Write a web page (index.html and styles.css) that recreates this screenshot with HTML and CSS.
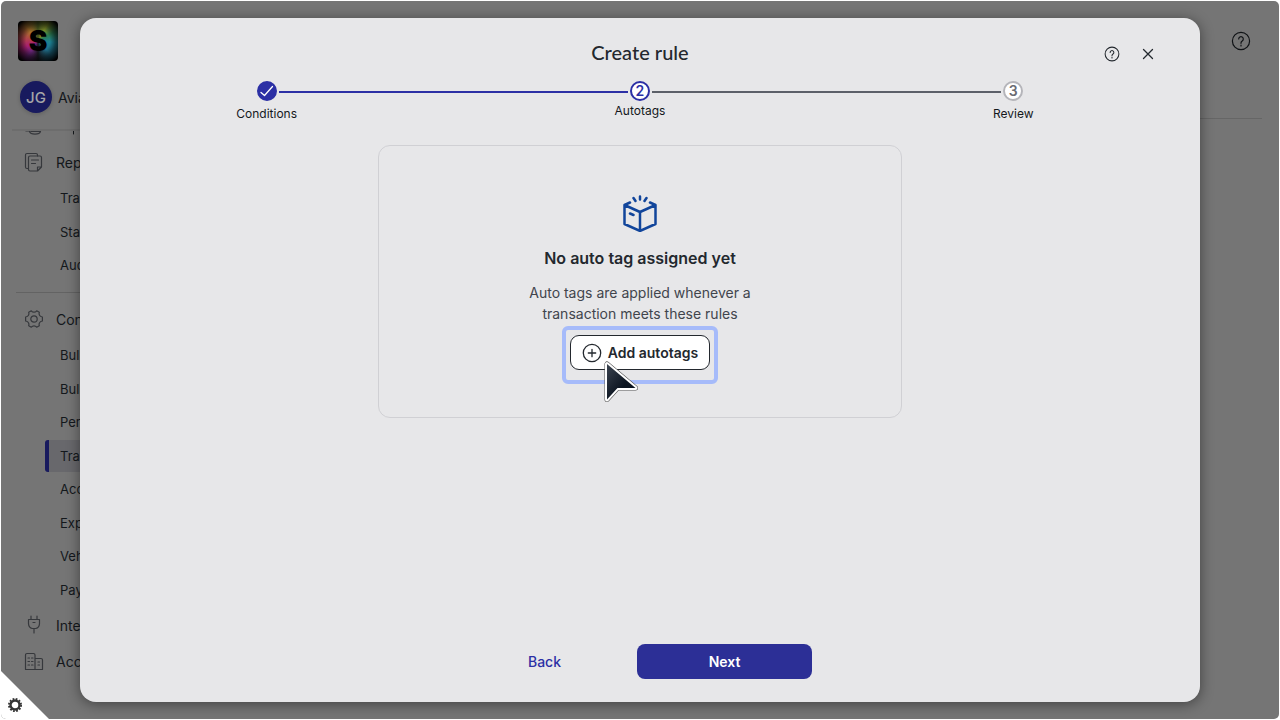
FILE: index.html
```
<!DOCTYPE html>
<html lang="en">
<head>
<meta charset="utf-8">
<meta name="viewport" content="width=device-width, initial-scale=1">
<title>Create rule</title>
<link rel="stylesheet" href="styles.css">
</head>
<body>
<div class="app">
  <aside class="sidebar">
    <div class="logo"><span class="logo-letter">S</span></div>
    <div class="account"><span class="avatar">JG</span><span>Avia</span></div>
    <nav class="nav">
      <div class="cut-row">
        <svg class="nav-icon" viewBox="0 0 20 20"><path d="M2 15h4M5.500 15.500c1 3.500 10 3.500 11 0"/><path d="M7 15.500h9"/></svg>
        <svg class="nav-tail" viewBox="0 0 24 4"><path d="M18.500 0v3"/></svg>
      </div>
      <a class="nav-main" href="#">
        <svg class="nav-icon" viewBox="0 0 20 20"><path d="M4 16.500H3A1.500 1.500 0 0 1 1.500 15V3A1.500 1.500 0 0 1 3 1.500h9A1.500 1.500 0 0 1 13.500 3v1"/><path d="M13.500 19H6a1.500 1.500 0 0 1-1.500-1.500v-12A1.500 1.500 0 0 1 6 4h10a1.500 1.500 0 0 1 1.500 1.500V15zM13.500 19v-4h4M7.500 8h7M7.500 11.500h4"/></svg>
        <span>Rep</span>
      </a>
      <ul class="sub sub-short">
        <li><a href="#">Tra</a></li>
        <li><a href="#">Stat</a></li>
        <li><a href="#">Aud</a></li>
      </ul>
      <hr class="divider">
      <a class="nav-main" href="#">
        <svg class="nav-icon" viewBox="0 0 20 20"><circle cx="10" cy="10" r="3.200"/><path d="M7.300 1.800C8.300 3 9 3.200 10 3.200s1.700-.2 2.700-1.400l2.600 1.500c-.5 1.500-.3 2.200.2 3 .5.900 1.100 1.400 2.900 1.700v4c-1.800.300-2.400.8-2.900 1.700-.5.800-.7 1.500-.2 3l-2.600 1.500c-1-1.200-1.700-1.400-2.700-1.400s-1.700.2-2.700 1.400l-2.600-1.500c.5-1.500.3-2.200-.2-3-.5-.9-1.100-1.400-2.900-1.700V8c1.800-.3 2.400-.8 2.900-1.700.5-.8.700-1.500.2-3z"/></svg>
        <span>Con</span>
      </a>
      <ul class="sub sub-long">
        <li><a href="#">Bulk</a></li>
        <li><a href="#">Bulk</a></li>
        <li><a href="#">Per</a></li>
        <li><a class="current" href="#" aria-current="page">Tra</a></li>
        <li><a href="#">Acc</a></li>
        <li><a href="#">Exp</a></li>
        <li><a href="#">Veh</a></li>
        <li><a href="#">Pay</a></li>
      </ul>
      <a class="nav-main" href="#">
        <svg class="nav-icon" viewBox="0 0 20 20"><path d="M7 1v3.500M13 1v3.500M4.500 4.500h11v4c0 3-2 5-4 5h-3c-2 0-4-2-4-5zM10 13.500V18M9 7.500h2"/></svg>
        <span>Inte</span>
      </a>
      <a class="nav-main" href="#">
        <svg class="nav-icon" viewBox="0 0 20 20"><path d="M1.500 18.500V4A1.500 1.500 0 0 1 3 2.500h6.500A1.500 1.500 0 0 1 11 4v14.500zM11 7.500h6A1.500 1.500 0 0 1 18.500 9v9.500H11"/><path d="M4 7h1.500M7.500 7H9M4 10.500h1.500M7.500 10.500H9M4 14h1.500M7.500 14H9M14 11h1.500M14 14h1.500"/></svg>
        <span>Acc</span>
      </a>
    </nav>
  </aside>
  <header class="topbar">
    <button class="icon-button help-large" type="button" aria-label="Help">
      <svg width="20" height="20" viewBox="0 0 20 20"><circle cx="10" cy="10" r="8.600"/><path d="M7.700 8a2.300 2.300 0 1 1 3.500 2c-.8.500-1.200.900-1.200 2v.3M10 14v1"/></svg>
    </button>
  </header>

  <section class="dialog" role="dialog" aria-modal="true" aria-labelledby="dialog-title">
    <header class="dialog-head">
      <h1 class="dialog-title" id="dialog-title">Create rule</h1>
      <div class="dialog-tools">
        <button class="icon-button" type="button" aria-label="Help">
          <svg width="16" height="16" viewBox="0 0 20 20"><circle cx="10" cy="10" r="8.600"/><path d="M7.700 8a2.300 2.300 0 1 1 3.500 2c-.8.500-1.200.900-1.200 2v.3M10 14v1"/></svg>
        </button>
        <button class="icon-button" type="button" aria-label="Close">
          <svg width="16" height="16" viewBox="0 0 16 16"><path d="M3.500 3.500l9 9M12.500 3.500l-9 9"/></svg>
        </button>
      </div>
    </header>
    <ol class="stepper">
      <li class="step done">
        <span class="line none"></span>
        <span class="dot"><svg width="16" height="16" viewBox="0 0 16 16"><path d="M2 9.500l3.500 3L13.500 3.500"/></svg></span>
        <span class="line"></span>
        <span class="step-label">Conditions</span>
      </li>
      <li class="step active">
        <span class="line"></span>
        <span class="dot">2</span>
        <span class="line after"></span>
        <span class="step-label">Autotags</span>
      </li>
      <li class="step todo">
        <span class="line after"></span>
        <span class="dot">3</span>
        <span class="line none"></span>
        <span class="step-label">Review</span>
      </li>
    </ol>
    <div class="card">
      <svg class="box-icon" viewBox="0 0 36 38"><path d="M8 8.500L2.500 11v19L18 37l15.500-7V11L28 8.500M2.500 11L18 18l15.500-7M18 18v19M8 19.500l3.500 1.500M18 2.500v3M11.500 4l2 3M24.500 4l-2 3"/></svg>
      <h2 class="card-title">No auto tag assigned yet</h2>
      <p class="card-text">Auto tags are applied whenever a transaction meets these rules</p>
      <div class="highlight">
        <button class="add-button" type="button">
          <svg width="20" height="20" viewBox="0 0 20 20"><circle cx="10" cy="10" r="8.700"/><path d="M10 6.300v7.400M6.300 10h7.400"/></svg>
          <span>Add autotags</span>
        </button>
        <svg class="pointer" viewBox="0 0 36 44">
          <defs><linearGradient id="ink" x1="0" y1="0" x2="1" y2="1"><stop offset="0" stop-color="#3b434f"/><stop offset="0.600" stop-color="#0b1420"/></linearGradient></defs>
          <path class="pointer-edge" d="M4 4v35.500L14.500 28H32.500z"/>
          <path class="pointer-rim" d="M4 4v35.500L14.500 28H32.500z"/>
          <path fill="url(#ink)" d="M4 4v35.500L14.500 28H32.500z"/>
        </svg>
      </div>
    </div>
    <footer class="actions">
      <button class="back" type="button">Back</button>
      <button class="next" type="button">Next</button>
    </footer>
  </section>

  <button class="corner" type="button" aria-label="Settings">
    <svg width="14" height="14" viewBox="0 0 14 14"><circle cx="7" cy="7" r="6.100" stroke-width="1.800" stroke-dasharray="1.750 1.444"/><circle cx="7" cy="7" r="4.500" stroke-width="2.400"/></svg>
  </button>
</div>
</body>
</html>
```
FILE: styles.css
```
* { box-sizing: border-box; }

body {
  margin: 0;
  background: #fff;
  color: #23282e;
  font-family: Inter, "Liberation Sans", sans-serif;
  font-size: 14px;
}

button {
  margin: 0;
  padding: 0;
  border: 0;
  background: none;
  color: inherit;
  font: inherit;
}

a { color: inherit; text-decoration: none; }
svg { display: block; fill: none; stroke: currentColor; stroke-linecap: round; stroke-linejoin: round; flex: none; }
ul, ol { margin: 0; padding: 0; list-style: none; }

.app {
  position: relative;
  display: flex;
  height: calc(100vh - 2px);
  margin: 1px;
  border-radius: 5px;
  overflow: hidden;
  background: #757575;
}

/* Sidebar */
.sidebar {
  width: 240px;
  padding: 20px 0 0 17px;
  color: #14181c;
}

.logo {
  display: grid;
  place-items: center;
  width: 40px;
  height: 40px;
  border-radius: 4px;
  background:
    radial-gradient(circle at center, transparent 42%, rgba(0, 0, 0, 0.5) 62%, #000 90%),
    conic-gradient(#3c4a1c, #7c8c28 30deg, #2c7a50 60deg, #1c8294 95deg, #20708c 135deg, #15151a 180deg, #6a2478 215deg, #a82070 245deg, #b03c50 275deg, #a8702c 320deg, #3c4a1c);
}

.logo-letter {
  color: #000;
  font-size: 28px;
  font-weight: 900;
  line-height: 40px;
}

.account {
  display: flex;
  align-items: center;
  gap: 6px;
  margin: 20px 0 16px 2px;
}

.avatar {
  display: grid;
  place-items: center;
  width: 32px;
  height: 32px;
  border-radius: 50%;
  background: #181a5e;
  box-shadow: 0 1px 4px rgba(0, 0, 0, 0.2);
  color: #a5a5a8;
  font-size: 15px;
  font-weight: 500;
}

.nav { border-top: 2px solid #6d6d6d; margin-left: -6px; }

.cut-row {
  display: flex;
  align-items: flex-end;
  height: 5px;
  padding-left: 12px;
  overflow: hidden;
}

.nav-tail { align-self: flex-start; width: 24px; height: 4px; margin-left: 11px; }

.nav-main {
  display: flex;
  align-items: center;
  gap: 12px;
  height: 36px;
  padding-left: 12px;
}

.cut-row + .nav-main { margin-top: 8px; }

.nav-icon { width: 20px; height: 20px; color: #36383c; stroke-width: 1.2; }

.sub {
  display: flex;
  flex-direction: column;
  justify-content: space-between;
  margin-left: 33px;
  font-size: 13px;
}

.sub-short { height: 99px; margin-top: 2px; }
.sub-long { height: 267px; margin-top: 2px; }
.sub-long + .nav-main { margin-top: 1px; }

.sub a {
  display: block;
  padding-left: 11px;
  border-left: 4px solid transparent;
  border-radius: 3px;
  line-height: 32px;
}

.sub .current { border-left-color: #181a5e; background: #68686c; }

.divider {
  height: 1px;
  margin: 11px 0 8px 4px;
  border: 0;
  background: #636363;
}

/* Page header behind the dialog */
.topbar {
  display: flex;
  flex: 1;
  justify-content: flex-end;
  height: 118px;
  margin-right: 17px;
  padding: 30px 11px 0 0;
  border-bottom: 1px solid #666;
}

.icon-button { display: block; height: 20px; stroke-width: 1.3; }
.help-large { color: #101316; stroke-width: 1.2; }

/* Dialog */
.dialog {
  position: absolute;
  inset: 17px 79px;
  display: flex;
  flex-direction: column;
  border-radius: 16px;
  background: #e7e7e9;
  box-shadow: 0 2px 14px rgba(0, 0, 0, 0.45);
}

.dialog-head {
  display: grid;
  grid-template-columns: 1fr auto 1fr;
  align-items: start;
  padding: 22px 44px 0;
}

.dialog-title {
  grid-column: 2;
  margin: 0;
  font-family: Lato, "Liberation Sans", sans-serif;
  font-size: 20px;
  font-weight: 500;
  line-height: 24px;
}

.dialog-tools { display: flex; justify-content: flex-end; gap: 20px; margin-top: 6px; }
.dialog-tools .icon-button { height: 16px; }

.stepper {
  display: grid;
  grid-template-columns: repeat(3, 1fr);
  margin-top: 17px;
}

.step {
  display: grid;
  grid-template-columns: 1fr 20px 1fr;
  align-items: center;
  align-content: start;
}

.line { height: 2px; margin-top: 2px; background: #2c30a5; }
.line.after { background: #5c6069; }
.line.none { background: none; }
.line:first-child { margin-right: 2px; }
.dot + .line { margin-left: 2px; }

.dot {
  display: grid;
  place-items: center;
  width: 20px;
  height: 20px;
  border: 2px solid #2c30a5;
  border-radius: 50%;
  background: #fff;
  color: #2c30a5;
  font-size: 14px;
  font-weight: 600;
  line-height: 16px;
}

.done .dot { background: #2c30a5; color: #fff; }
.done svg { stroke-width: 1.3; }
.todo .dot { border-color: #b5b5ba; color: #6a6c73; }

.step-label {
  grid-column: 1 / -1;
  margin-top: 4px;
  color: #14181c;
  font-size: 12px;
  line-height: 18px;
  text-align: center;
}

.active .step-label { margin-top: 1px; }

.card {
  display: flex;
  flex-direction: column;
  align-items: center;
  align-self: center;
  width: 524px;
  max-width: 100%;
  margin-top: 22px;
  padding: 48px 0 33px;
  border: 1px solid #d0d0d4;
  border-radius: 12px;
}

.box-icon { width: 36px; height: 38px; color: #11459b; stroke-width: 2.5; }

.card-title {
  margin: 14px 0 12px;
  font-size: 16px;
  font-weight: 600;
  line-height: 24px;
}

.card-text {
  max-width: 240px;
  margin: 0;
  color: #41454d;
  line-height: 21px;
  text-align: center;
}

.highlight {
  position: relative;
  margin-top: 2px;
  padding: 5px 4px 10px;
  border: 4px solid #a6bbfa;
  border-radius: 6px;
}

.add-button {
  display: flex;
  align-items: center;
  gap: 6px;
  height: 35px;
  padding: 0 11px;
  border: 1px solid #23282e;
  border-radius: 9px;
  background: #fff;
  font-weight: 600;
}

.add-button svg { stroke-width: 1.3; }

.pointer {
  position: absolute;
  top: 30px;
  left: 37px;
  width: 36px;
  height: 44px;
  stroke: none;
}

.pointer-edge { stroke: #555; stroke-width: 5; }
.pointer-rim { stroke: #fff; stroke-width: 4; }

.actions {
  display: flex;
  justify-content: center;
  gap: 30px;
  margin-top: auto;
  padding: 0 0 23px 14px;
}

.actions button { height: 35px; border-radius: 8px; }
.back { width: 125px; color: #2c30a5; font-weight: 500; }
.next { width: 175px; background: #2c2f96; color: #fff; font-weight: 600; }

.corner {
  position: absolute;
  bottom: 0;
  left: 0;
  display: flex;
  align-items: flex-end;
  width: 48px;
  height: 48px;
  padding: 0 0 7px 7px;
  background: #fff;
  clip-path: polygon(0 0, 100% 100%, 0 100%);
  color: #333;
}

.corner svg { stroke-linecap: butt; }
```
